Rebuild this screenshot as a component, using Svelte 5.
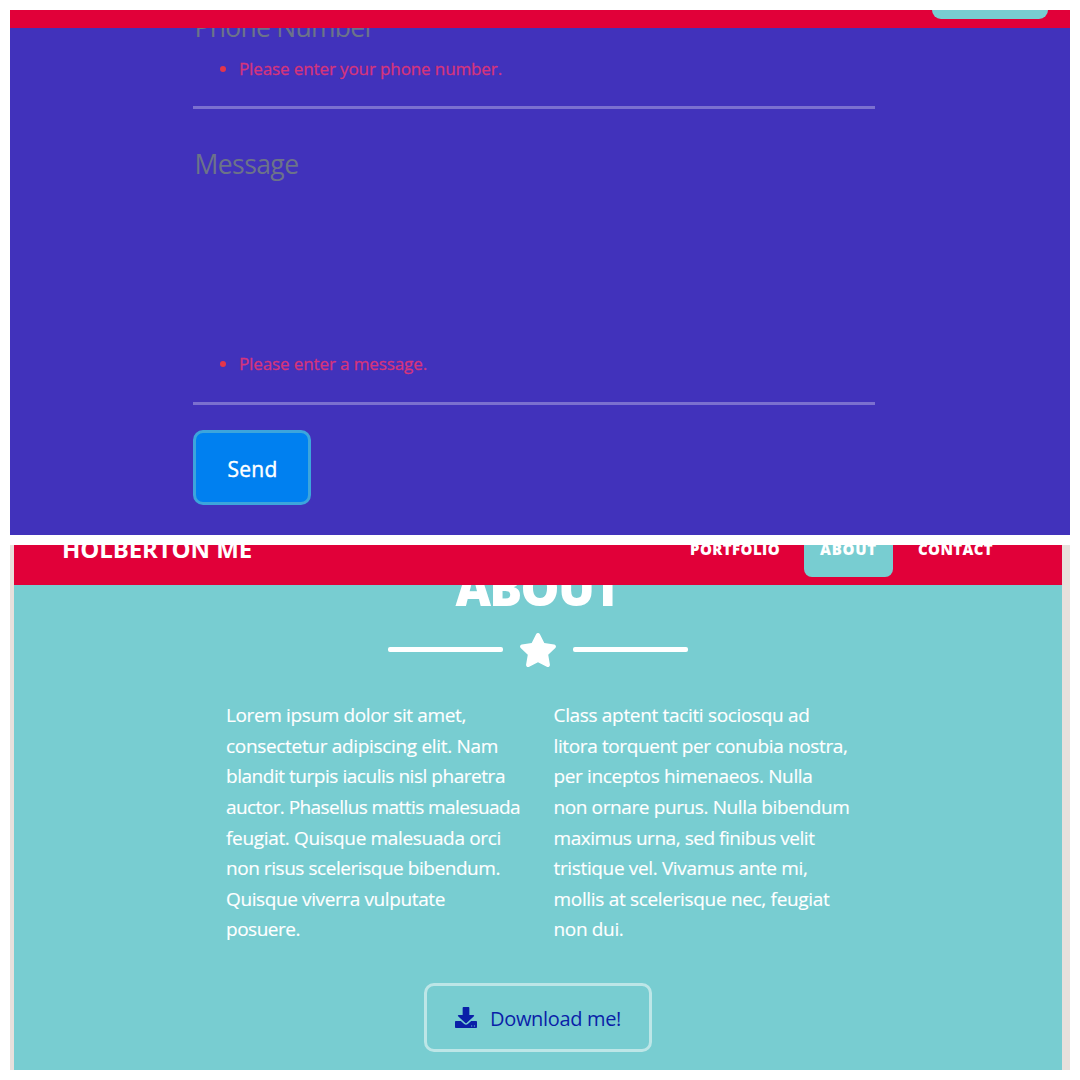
<script>
  const columns = [
    [
      ['Lorem ipsum dolor sit amet,', 240],
      ['consectetur adipiscing elit. Nam', 272],
      ['blandit turpis iaculis nisl pharetra', 279],
      ['auctor. Phasellus mattis malesuada', 294],
      ['feugiat. Quisque malesuada orci', 275],
      ['non risus scelerisque bibendum.', 274],
      ['Quisque viverra vulputate', 219],
      ['posuere.', 74]
    ],
    [
      ['Class aptent taciti sociosqu ad', 256],
      ['litora torquent per conubia nostra,', 294],
      ['per inceptos himenaeos. Nulla', 259],
      ['non ornare purus. Nulla bibendum', 296],
      ['maximus urna, sed finibus velit', 261],
      ['tristique vel. Vivamus ante mi,', 254],
      ['mollis at scelerisque nec, feugiat', 276],
      ['non dui.', 70]
    ]
  ];

  // Tracks a line of text so that it sets to the given measure.
  function fit(node, width) {
    const natural = node.getBoundingClientRect().width;
    node.style.letterSpacing = `${(width - natural) / node.textContent.length}px`;
  }
</script>

<main class="page">
  <section class="panel contact">
    <header class="bar slim"><span class="pill-end"></span></header>
    <form class="form" onsubmit={(e) => e.preventDefault()}>
      <div class="field phone">
        <div class="label cut"><span use:fit={180}>Phone Number</span></div>
        <ul class="errors"><li><span use:fit={263}>Please enter your phone number.</span></li></ul>
      </div>
      <div class="field message">
        <div class="label"><span use:fit={104}>Message</span></div>
        <ul class="errors"><li><span use:fit={188}>Please enter a message.</span></li></ul>
      </div>
      <button class="send" type="submit"><span use:fit={50}>Send</span></button>
    </form>
  </section>

  <section class="panel about">
    <header class="bar nav">
      <div class="brand"><span use:fit={190}>HOLBERTON ME</span></div>
      <nav class="links">
        <a href="#portfolio" class="link first"><span use:fit={90}>PORTFOLIO</span></a>
        <a href="#about" class="link active"><span use:fit={57}>ABOUT</span></a>
        <a href="#contact" class="link last"><span use:fit={75}>CONTACT</span></a>
      </nav>
    </header>
    <div class="heading"><h2><span use:fit={165}>ABOUT</span></h2></div>
    <div class="divider">
      <i class="rule"></i>
      <svg class="star" viewBox="20 0 536 512" preserveAspectRatio="none"><path fill="#fff" d="M259.3 17.8L194 150.2 47.900 171.500c-26.200 3.800-36.700 36.100-17.700 54.600l105.700 103-25 145.500c-4.500 26.300 23.200 46 46.400 33.700L288 439.600l130.700 68.700c23.200 12.200 50.900-7.400 46.400-33.700l-25-145.500 105.700-103c19-18.500 8.500-50.800-17.700-54.600L382 150.200 316.700 17.800c-11.700-23.600-45.600-23.900-57.400 0z" /></svg>
      <i class="rule"></i>
    </div>
    <div class="columns">
      {#each columns as lines}
        <p class="column">
          {#each lines as [text, width]}
            <span class="row"><span use:fit={width}>{text}</span></span>
          {/each}
        </p>
      {/each}
    </div>
    <button class="download" type="button">
      <svg class="icon" viewBox="0 0 512 512" preserveAspectRatio="none"><path fill="#0a1fa8" fill-rule="evenodd" d="M202 0h108c13 0 24 11 24 24v168h92c18 0 27 21 14 34L271 388c-8 8-22 8-30 0L72 226c-13-13-4-34 14-34h92V24c0-13 11-24 24-24zM24 344h112l78 73c24 23 60 23 84 0l78-73h112c13 0 24 11 24 24v120c0 13-11 24-24 24H24c-13 0-24-11-24-24V368c0-13 11-24 24-24zm352 108v24h24v-24zm64 0v24h24v-24z" /></svg>
      <span use:fit={131}>Download me!</span>
    </button>
  </section>
</main>

<style>
  :global(body) { margin: 0; background: #fff; }
  .page {
    box-sizing: border-box;
    width: 1080px;
    height: 1080px;
    padding: 10px;
    display: flex;
    flex-direction: column;
    gap: 10px;
    background: #fff;
    color: #fff;
    font-family: "Open Sans", "Noto Sans", sans-serif;
  }
  span { white-space: nowrap; }
  .panel { box-sizing: border-box; height: 525px; overflow: hidden; }
  .contact { background: #4132bb; }
  .bar { background: #e10039; display: flex; }
  .slim { height: 18px; justify-content: flex-end; padding-right: 22px; }
  .pill-end { width: 116px; height: 9px; background: #78cdd1; border-radius: 0 0 9px 9px; }
  .form { width: 682px; margin-left: 183px; }
  .field { box-sizing: border-box; border-bottom: 3px solid #7b70cf; }
  .phone { height: 81px; }
  .message { height: 296px; padding-top: 35px; }
  .label { height: 40px; line-height: 40px; padding-left: 1.500px; font-size: 26.500px; color: #6c7389; }
  .cut { height: 13px; overflow: hidden; display: flex; align-items: flex-end; }
  .cut span { margin-bottom: -6px; }
  .errors { margin: 0; padding-left: 46px; color: #d6347c; font-size: 17px; line-height: 26px; -webkit-text-stroke: 0.300px #d6347c; }
  .errors li::marker { color: #e4354b; }
  .phone .errors { padding-top: 14.500px; }
  .message .errors { padding-top: 166.500px; }
  button { font-family: inherit; }
  .send {
    box-sizing: border-box;
    display: flex;
    align-items: center;
    justify-content: center;
    width: 118px;
    height: 75px;
    margin-top: 25px;
    padding: 2px 0 0 1px;
    color: #fff;
    font-size: 21px;
    -webkit-text-stroke: 0.400px #fff;
    background: #0080f0;
    border: 3px solid #3ca5dc;
    border-radius: 10px;
  }
  .about {
    background: #78cdd1;
    border-left: 4px solid #e8e0dc;
    border-right: 8px solid #e8e0dc;
  }
  .nav { height: 40px; justify-content: space-between; }
  .brand { padding-left: 48px; line-height: 32px; margin-top: -12px; font-size: 24px; font-weight: 700; }
  .links { display: flex; height: 32px; padding-right: 53px; }
  .link { color: #fff; text-decoration: none; font-size: 15px; font-weight: 800; line-height: 24px; padding: 0 16px; height: 32px; box-sizing: border-box; }
  .link span { display: block; margin-top: -8px; }
  .first { padding-right: 24px; }
  .active { background: #78cdd1; border-radius: 0 0 8px 8px; }
  .last { padding-left: 25px; }
  .heading { height: 22px; overflow: hidden; display: flex; justify-content: center; align-items: flex-end; }
  h2 { margin: 0 0 -9.500px; font-size: 49px; line-height: 60px; font-weight: 800; }
  .divider { display: flex; justify-content: center; align-items: center; gap: 17px; height: 84px; }
  .rule { width: 115px; height: 5px; background: #fff; border-radius: 2px; }
  .star { width: 36px; height: 34px; margin-top: 1px; }
  .columns { display: flex; gap: 34px; margin-left: 212px; margin-top: 9px; }
  .column { margin: 0; width: 293.500px; font-size: 19px; line-height: 30.650px; -webkit-text-stroke: 0.150px #fff; }
  .row { display: block; height: 30.650px; }
  .download {
    box-sizing: border-box;
    display: flex;
    align-items: center;
    gap: 13px;
    width: 228px;
    height: 69px;
    margin: 38px 0 0 410px;
    padding: 2px 0 0 28px;
    color: #0a1fa8;
    font-size: 20px;
    background: transparent;
    border: 3px solid #bde6e7;
    border-radius: 10px;
  }
  .icon { width: 22px; height: 21px; margin-top: -2px; }
</style>
